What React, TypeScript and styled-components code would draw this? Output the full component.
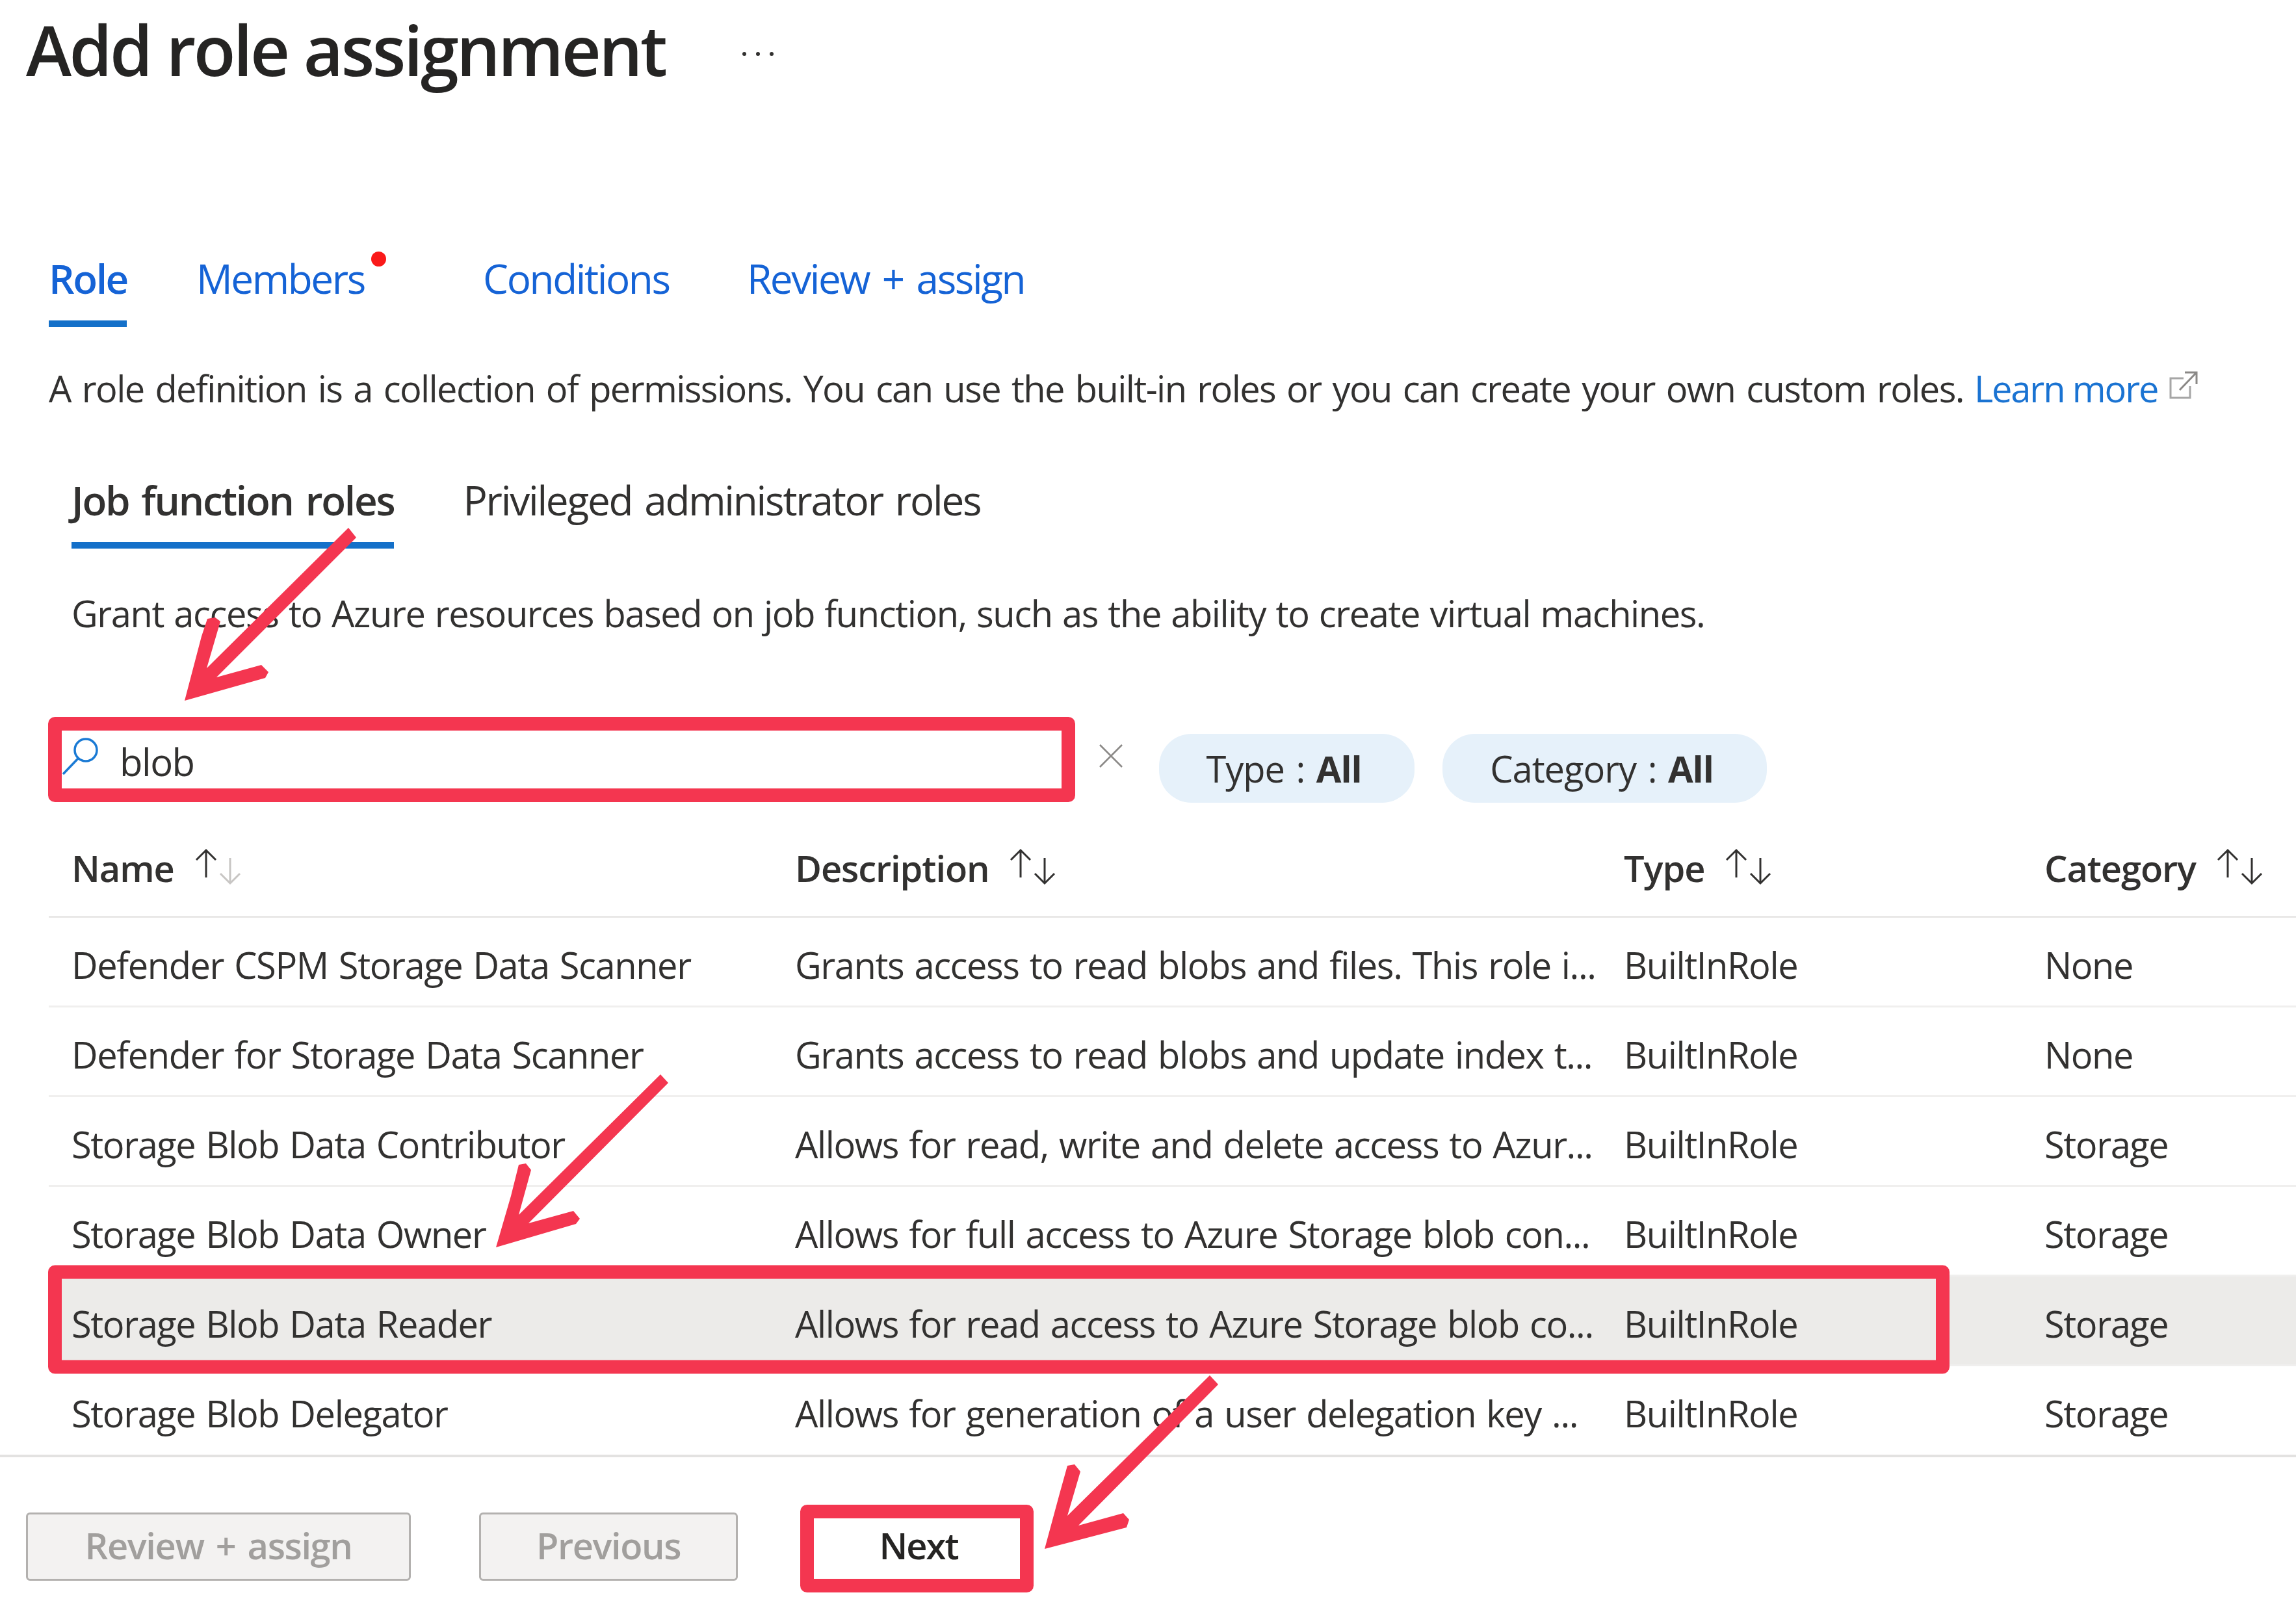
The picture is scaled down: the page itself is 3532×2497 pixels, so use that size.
import React from 'react'
import styled, { createGlobalStyle } from 'styled-components'

const GlobalStyle = createGlobalStyle`
  html, body {
    margin: 0;
    padding: 0;
    background: #fff;
  }
  body {
    font-family: "Open Sans", "Noto Sans", sans-serif;
    color: #323130;
  }
`

const Page = styled.div`
  position: relative;
  width: 3532px;
  height: 2497px;
  overflow: hidden;
  background: #fff;
`

const TitleRow = styled.div`
  display: flex;
  align-items: center;
  height: 152px;
  padding-left: 40px;
  gap: 117px;
`

const Title = styled.h1`
  margin: 0;
  font-size: 106px;
  font-weight: 600;
  letter-spacing: -3.5px;
  color: #252423;
  line-height: 152px;
`

const MoreDots = styled.svg`
  width: 50px;
  height: 8px;
  margin-top: 14px;
  fill: #323130;
`

const WizardTabs = styled.div`
  display: flex;
  align-items: flex-start;
  margin-top: 232px;
  padding-left: 75px;
  height: 119px;
`

const WizardTab = styled.div<{ $active?: boolean; $width: number }>`
  position: relative;
  width: ${({ $width }) => $width}px;
  height: 119px;
  font-size: 62px;
  line-height: 88px;
  letter-spacing: -2.4px;
  word-spacing: 6px;
  font-weight: ${({ $active }) => ($active ? 600 : 400)};
  color: #1563d6;
  white-space: nowrap;
`

const TabBar = styled.div<{ $width: number }>`
  position: absolute;
  left: 0;
  bottom: 0;
  width: ${({ $width }) => $width}px;
  height: 10px;
  background: #1470c9;
`

const RedDot = styled.span`
  position: absolute;
  left: 269px;
  top: 3px;
  width: 23px;
  height: 23px;
  border-radius: 50%;
  background: #fa1a1a;
`

const Intro = styled.div`
  display: flex;
  align-items: center;
  margin-top: 56px;
  padding-left: 75px;
  font-size: 56px;
  line-height: 76px;
  letter-spacing: -1.6px;
  word-spacing: 4px;
  white-space: nowrap;
`

const LearnMore = styled.a`
  margin-left: 16px;
  color: #1a73d2;
  letter-spacing: -2.1px;
  word-spacing: 0;
`

const ExternalIcon = styled.svg`
  width: 46px;
  height: 46px;
  margin-left: 16px;
  margin-top: -8px;
`

const RoleTabs = styled.div`
  display: flex;
  gap: 106px;
  margin-top: 83px;
  padding-left: 110px;
  height: 126px;
`

const RoleTab = styled.div<{ $active?: boolean }>`
  height: 126px;
  font-size: 62px;
  line-height: 102px;
  letter-spacing: -2.2px;
  word-spacing: 5px;
  font-weight: ${({ $active }) => ($active ? 600 : 400)};
  border-bottom: ${({ $active }) => ($active ? '10px solid #1470c9' : 'none')};
  box-sizing: border-box;
  white-space: nowrap;
`

const Grant = styled.div`
  margin-top: 61px;
  padding-left: 110px;
  font-size: 56px;
  line-height: 76px;
  letter-spacing: -1.4px;
  word-spacing: 2.2px;
  white-space: nowrap;
`

const Toolbar = styled.div`
  display: flex;
  align-items: center;
  height: 106px;
  margin-top: 148px;
  padding-left: 86px;
`

const SearchField = styled.div`
  display: flex;
  align-items: center;
  width: 1548px;
  height: 90px;
  margin-top: -22px;
  gap: 30px;
  font-size: 58px;
  letter-spacing: -1.5px;
`

const SearchIcon = styled.svg`
  width: 60px;
  height: 60px;
  margin-left: 8px;
  margin-top: -16px;
`

const ClearIcon = styled.svg`
  width: 38px;
  height: 38px;
  margin-left: 56px;
  margin-top: -38px;
`

const Pill = styled.div<{ $width: number }>`
  display: flex;
  align-items: center;
  justify-content: center;
  box-sizing: border-box;
  width: ${({ $width }) => $width}px;
  height: 106px;
  padding-right: 9px;
  border-radius: 50px;
  background: #e6f1fa;
  font-size: 56px;
  letter-spacing: -1px;
  word-spacing: 4px;
  white-space: pre;
`

const TypePill = styled(Pill)`
  margin-left: 55px;
`

const CategoryPill = styled(Pill)`
  margin-left: 43px;
`

const Strong = styled.b`
  font-weight: 700;
`

const TableBlock = styled.div`
  margin-left: 75px;
`

const Grid = styled.div<{ $selected?: boolean; $last?: boolean }>`
  display: grid;
  grid-template-columns: 1113px 1275px 647px 422px;
  align-items: center;
  height: ${({ $last }) => ($last ? 136 : 138)}px;
  box-sizing: border-box;
  border-bottom: ${({ $last }) => ($last ? 'none' : '3px solid #f0efee')};
  background: ${({ $selected }) => ($selected ? '#ecebe9' : 'transparent')};
`

const HeaderGrid = styled(Grid)`
  height: 177px;
  padding-top: 26px;
  border-bottom: 3px solid #e9e8e7;
`

const HeadCell = styled.div`
  display: flex;
  align-items: center;
  gap: 32px;
  padding-left: 35px;
  font-size: 56px;
  font-weight: 600;
  letter-spacing: -1.1px;
  white-space: nowrap;
`

const Cell = styled.div`
  padding-left: 35px;
  padding-top: 8px;
  font-size: 56px;
  letter-spacing: -1.4px;
  word-spacing: 3px;
  white-space: nowrap;
`

const SortSvg = styled.svg`
  width: 72px;
  height: 60px;
  margin-top: -3px;
`

const Footer = styled.div`
  display: flex;
  align-items: center;
  height: 261px;
  box-sizing: border-box;
  border-top: 4px solid #e3e2e1;
  padding: 18px 0 0 40px;
`

const DisabledButton = styled.div<{ $width: number; $gap: number }>`
  display: flex;
  align-items: center;
  justify-content: center;
  box-sizing: border-box;
  width: ${({ $width }) => $width}px;
  height: 105px;
  margin-right: ${({ $gap }) => $gap}px;
  padding-bottom: 6px;
  border: 3px solid #b3b1af;
  border-radius: 6px;
  background: #f3f2f1;
  color: #a19f9d;
  font-size: 56px;
  font-weight: 600;
  letter-spacing: -1.4px;
  word-spacing: 5px;
`

const NextButton = styled.div`
  position: relative;
  display: flex;
  align-items: center;
  justify-content: center;
  box-sizing: border-box;
  width: 318px;
  height: 105px;
  padding: 0 0 6px 4px;
  color: #252423;
  font-size: 56px;
  font-weight: 600;
  letter-spacing: -2px;

  &::after {
    content: '';
    position: absolute;
    left: 0;
    right: 0;
    bottom: 1px;
    height: 2px;
    background: #323130;
  }
`

const Annotations = styled.svg`
  position: absolute;
  left: 0;
  top: 0;
  width: 3532px;
  height: 2497px;
  pointer-events: none;
`

interface Row {
  name: string
  description: string
  category: string
  selected?: boolean
}

const rows: Row[] = [
  { name: 'Defender CSPM Storage Data Scanner', description: 'Grants access to read blobs and files. This role i...', category: 'None' },
  { name: 'Defender for Storage Data Scanner', description: 'Grants access to read blobs and update index t...', category: 'None' },
  { name: 'Storage Blob Data Contributor', description: 'Allows for read, write and delete access to Azur...', category: 'Storage' },
  { name: 'Storage Blob Data Owner', description: 'Allows for full access to Azure Storage blob con...', category: 'Storage' },
  { name: 'Storage Blob Data Reader', description: 'Allows for read access to Azure Storage blob co...', category: 'Storage', selected: true },
  { name: 'Storage Blob Delegator', description: 'Allows for generation of a user delegation key ...', category: 'Storage' },
]

const SortIcon = ({ dim }: { dim?: boolean }) => (
  <SortSvg viewBox="0 0 72 60" fill="none" strokeWidth="3">
    <path d="M17 46V4M2 19 17 4l15 15" stroke="#323130" />
    <path d="M54 16v39M39 40l15 15 15-15" stroke={dim ? '#c8c6c4' : '#323130'} />
  </SortSvg>
)

const arrows = [
  '536,812 548,827 333,1042 402,1023 413,1034 408,1043 284,1078 310,979 319,952 331,950 339,956 318,1028',
  '1016,1653 1028,1666 813,1882 882,1863 892,1875 886,1883 763,1919 786,1840 798,1792 809,1790 817,1800 798,1869',
  '1861,2116 1874,2130 1659,2347 1728,2328 1737,2338 1733,2350 1607,2383 1630,2298 1642,2255 1653,2253 1662,2264 1642,2332',
]

const App = () => (
  <Page>
    <GlobalStyle />
    <TitleRow>
      <Title>Add role assignment</Title>
      <MoreDots viewBox="0 0 50 8">
        <circle cx="4" cy="4" r="3" />
        <circle cx="25" cy="4" r="3" />
        <circle cx="46" cy="4" r="3" />
      </MoreDots>
    </TitleRow>

    <WizardTabs>
      <WizardTab $active $width={227}>
        Role
        <TabBar $width={120} />
      </WizardTab>
      <WizardTab $width={441}>
        Members
        <RedDot />
      </WizardTab>
      <WizardTab $width={406}>Conditions</WizardTab>
      <WizardTab $width={440}>Review + assign</WizardTab>
    </WizardTabs>

    <Intro>
      A role definition is a collection of permissions. You can use the built-in roles or you can create your own custom roles.
      <LearnMore>Learn more</LearnMore>
      <ExternalIcon viewBox="0 0 46 46" fill="none" strokeWidth="3">
        <path d="M24 12H4v30h30V24" stroke="#a6a6a6" />
        <path d="M18 30 43 4M26 3h18v18" stroke="#8a8886" />
      </ExternalIcon>
    </Intro>

    <RoleTabs>
      <RoleTab $active>Job function roles</RoleTab>
      <RoleTab>Privileged administrator roles</RoleTab>
    </RoleTabs>

    <Grant>Grant access to Azure resources based on job function, such as the ability to create virtual machines.</Grant>

    <Toolbar>
      <SearchField>
        <SearchIcon viewBox="0 0 60 60" fill="none" stroke="#1a7ad4" strokeWidth="3.5">
          <circle cx="38" cy="21" r="17" />
          <path d="M26 34 3 58" />
        </SearchIcon>
        blob
      </SearchField>
      <ClearIcon viewBox="0 0 38 38" fill="none" stroke="#8a8886" strokeWidth="2.5">
        <path d="M2 2l34 34M36 2 2 36" />
      </ClearIcon>
      <TypePill $width={393}>
        Type : <Strong>All</Strong>
      </TypePill>
      <CategoryPill $width={499}>
        Category : <Strong>All</Strong>
      </CategoryPill>
    </Toolbar>

    <TableBlock>
      <HeaderGrid>
        <HeadCell>
          Name <SortIcon dim />
        </HeadCell>
        <HeadCell>
          Description <SortIcon />
        </HeadCell>
        <HeadCell>
          Type <SortIcon />
        </HeadCell>
        <HeadCell>
          Category <SortIcon />
        </HeadCell>
      </HeaderGrid>
      {rows.map((row, i) => (
        <Grid key={row.name} $selected={row.selected} $last={i === rows.length - 1}>
          <Cell>{row.name}</Cell>
          <Cell>{row.description}</Cell>
          <Cell>BuiltInRole</Cell>
          <Cell>{row.category}</Cell>
        </Grid>
      ))}
    </TableBlock>

    <Footer>
      <DisabledButton $width={592} $gap={105}>Review + assign</DisabledButton>
      <DisabledButton $width={398} $gap={117}>Previous</DisabledButton>
      <NextButton>Next</NextButton>
    </Footer>

    <Annotations viewBox="0 0 3532 2497" fill="none" stroke="#f43650" strokeWidth="21" strokeLinejoin="round">
      <rect x="84.5" y="1113.5" width="1559" height="110" />
      <rect x="84.5" y="1957" width="2904" height="146" />
      <rect x="1241.5" y="2325.5" width="338" height="114" />
      {arrows.map((points) => (
        <polygon key={points} points={points} fill="#f43650" stroke="none" />
      ))}
    </Annotations>
  </Page>
)

export default App
